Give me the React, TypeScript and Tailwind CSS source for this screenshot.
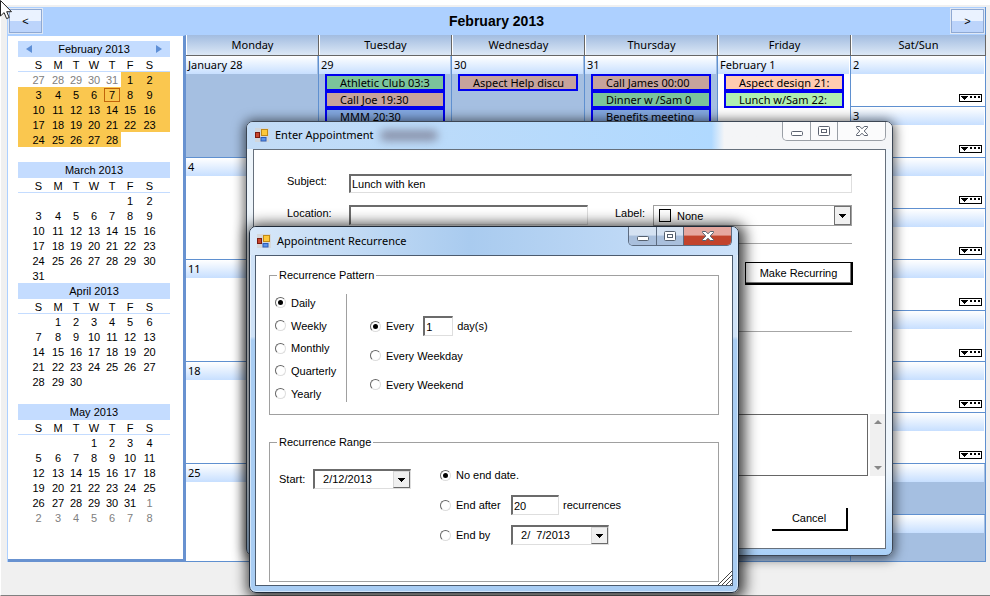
import React, { useId } from 'react';

const TAHOMA = "font-['Noto_Sans','DejaVu_Sans',sans-serif]";
const SEGOE = "font-['Noto_Sans','Open_Sans',sans-serif]";
const ARIAL = "font-['Liberation_Sans',Arial,sans-serif]";
const SUNKEN =
  'border border-t-2 border-t-[#6b6b6b] border-l-2 border-l-[#6b6b6b] border-r-[#dedede] border-b-[#dedede] bg-white';

/* ---------- month overview in the side bar ---------- */

type Month = { name: string; first: number; days: number; before?: number[]; after?: number[]; current?: boolean };

const months: Month[] = [
  { name: 'February 2013', first: 5, days: 28, before: [27, 28, 29, 30, 31], current: true },
  { name: 'March 2013', first: 5, days: 31 },
  { name: 'April 2013', first: 1, days: 30 },
  { name: 'May 2013', first: 3, days: 31, after: [1, 2, 3, 4, 5, 6, 7, 8] },
];

const weekdays = ['S', 'M', 'T', 'W', 'T', 'F', 'S'];

function cellPadding(col: number) {
  if (col === 0) return 'pl-[10px]';
  if (col === 6) return 'pr-[10px]';
  return '';
}

function MiniMonth({ month }: { month: Month }) {
  const rows = [0, 1, 2, 3, 4, 5];
  return (
    <section>
      <div className="flex h-4 items-center justify-between bg-[#c4dcff] px-2 text-xs leading-4">
        {month.current ? (
          <button aria-label="Previous month" className="h-2 w-[6px]">
            <svg viewBox="0 0 6 8" className="block h-2 w-[6px]"><path d="M6 0v8L0 4z" fill="#5e8fd6" /></svg>
          </button>
        ) : <span />}
        <h2 className="text-[11px]">{month.name}</h2>
        {month.current ? (
          <button aria-label="Next month" className="h-2 w-[6px]">
            <svg viewBox="0 0 6 8" className="block h-2 w-[6px]"><path d="M0 0v8l6-4z" fill="#5e8fd6" /></svg>
          </button>
        ) : <span />}
      </div>
      <table className="w-full table-fixed border-collapse text-center text-[11px] leading-[14px]">
        <colgroup>
          <col className="w-[31px]" />
          <col /><col /><col /><col /><col />
          <col className="w-[31px]" />
        </colgroup>
        <thead>
          <tr className="h-[15px] shadow-[inset_0_-1px_0_#c4dcff]">
            {weekdays.map((d, i) => (
              <th key={i} className={`pt-px font-normal ${cellPadding(i)}`}>{d}</th>
            ))}
          </tr>
        </thead>
        <tbody>
          {rows.map((r) => (
            <tr key={r} className="h-[15px]">
              {weekdays.map((_, c) => {
                const n = r * 7 + c - month.first + 1;
                const inside = n >= 1 && n <= month.days;
                const outside = n < 1 ? month.before?.[r * 7 + c] : month.after?.[n - month.days - 1];
                const today = month.current && n === 7;
                return (
                  <td
                    key={c}
                    className={`pt-px ${cellPadding(c)} ${inside && month.current ? 'bg-[#fac74f]' : ''} ${inside ? '' : 'text-[#808080]'}`}
                  >
                    {today ? (
                      <span className="mx-auto block h-[14px] w-4 border border-[#c0640a] leading-3">7</span>
                    ) : inside ? n : outside}
                  </td>
                );
              })}
            </tr>
          ))}
        </tbody>
      </table>
    </section>
  );
}

/* ---------- month grid ---------- */

type Item = { text: string; color: string };
const ROSE = 'bg-[#c6a39c]';
const GREEN = 'bg-[#7bc49b]';
const BLUE = 'bg-[#84a9e2]';

type Day = { label?: string; off?: boolean; items?: Item[] };

const weeks: { days: Day[]; weekend: { label?: string; off?: boolean }[] }[] = [
  {
    days: [
      { label: 'January 28', off: true },
      {
        label: '29', off: true,
        items: [
          { text: 'Athletic Club 03:3', color: GREEN },
          { text: 'Call Joe 19:30', color: ROSE },
          { text: 'MMM 20:30', color: BLUE },
        ],
      },
      { label: '30', off: true, items: [{ text: 'Aspect Help discu', color: ROSE }] },
      {
        label: '31', off: true,
        items: [
          { text: 'Call James 00:00', color: ROSE },
          { text: 'Dinner w /Sam 0', color: GREEN },
          { text: 'Benefits meeting', color: BLUE },
        ],
      },
      {
        label: 'February 1',
        items: [
          { text: 'Aspect design 21:', color: 'bg-[#ffcbb0]' },
          { text: 'Lunch w/Sam 22:', color: 'bg-[#b0f0b0]' },
        ],
      },
    ],
    weekend: [{ label: '2' }, { label: '3' }],
  },
  { days: [{ label: '4' }, {}, {}, {}, {}], weekend: [{}, {}] },
  { days: [{ label: '11' }, {}, {}, {}, {}], weekend: [{}, {}] },
  { days: [{ label: '18' }, {}, {}, {}, {}], weekend: [{}, {}] },
  { days: [{ label: '25' }, {}, {}, {}, { off: true }], weekend: [{ off: true }, { off: true }] },
];

const GRID = 'grid grid-cols-[repeat(5,minmax(0,133fr))_minmax(0,135fr)]';

function DayLabel({ text }: { text?: string }) {
  return (
    <div className="mr-[1px] h-[18px] shrink-0 bg-linear-to-b from-white to-[#c7dfff] pl-[2px] text-[11px] leading-[17px]">{text}</div>
  );
}

function MoreButton() {
  return (
    <button aria-label="More appointments" className="mt-auto mr-[3px] mb-1 self-end">
      <svg viewBox="0 0 23 8" className="block h-2 w-[23px]" shapeRendering="crispEdges">
        <rect x=".5" y=".5" width="22" height="7" fill="#fff" stroke="#000" />
        <path d="M2 2h7v1H8v1H7v1H6v1H5V5H4V4H3V3H2zM11 2h2v2h-2zM15 2h2v2h-2zM19 2h2v2h-2z" fill="#000" />
      </svg>
    </button>
  );
}

function MonthGrid() {
  return (
    <div className={`flex min-w-0 flex-1 flex-col ${TAHOMA}`}>
      <div className={`${GRID} h-[21px] border-b border-[#666]`}>
        {['Monday', 'Tuesday', 'Wednesday', 'Thursday', 'Friday', 'Sat/Sun'].map((d) => (
          <div
            key={d}
            className="border-r border-l border-r-[#666] border-l-white bg-linear-to-b from-[#a2bce0] to-[#dce8f6] text-center text-[11px] leading-5"
          >
            {d}
          </div>
        ))}
      </div>
      {weeks.map((w, i) => (
        <div key={i} className={`${GRID} border-b border-[#5f90d0] ${i === 4 ? 'h-[98px]' : 'h-[102px]'}`}>
          {w.days.map((d, j) => (
            <div key={j} className={`overflow-hidden border-r border-[#5f90d0] ${d.off ? 'bg-[#a5bfe1]' : 'bg-white'}`}>
              <DayLabel text={d.label} />
              <ul className="mx-[6px] text-[11px]">
                {d.items?.map((it) => (
                  <li key={it.text} className={`h-[17px] overflow-hidden border-2 border-[#0000f0] pl-[13px] leading-[13px] whitespace-nowrap ${it.color}`}>
                    {it.text}
                  </li>
                ))}
              </ul>
            </div>
          ))}
          <div className="flex flex-col border-r border-[#5f90d0]">
            {w.weekend.map((d, j) => (
              <div
                key={j}
                className={`flex flex-col ${j === 0 ? 'h-[51px] border-b border-[#5f90d0]' : 'flex-1'} ${d.off ? 'bg-[#a5bfe1]' : 'bg-white'}`}
              >
                <DayLabel text={d.label} />
                {!d.off && <MoreButton />}
              </div>
            ))}
          </div>
        </div>
      ))}
    </div>
  );
}

function NavButton({ label, children }: { label: string; children: React.ReactNode }) {
  return (
    <button
      aria-label={label}
      className="h-6 w-[33px] border border-[#8fa9d3] bg-linear-to-b from-[#eaf2ff] from-50% to-[#bcd4fb] to-50% text-[11px] leading-5 outline-1 outline-[#dfe8f5]"
    >
      {children}
    </button>
  );
}

/* ---------- dialog windows ---------- */

function FormIcon() {
  return (
    <svg viewBox="0 0 14 14" className="h-[14px] w-[14px] shrink-0">
      <rect width="14" height="14" fill="#d4d4d4" opacity=".8" />
      <rect x=".5" y="4.5" width="4" height="5" fill="#c8452c" stroke="#7c1c10" />
      <rect x="6.5" y="1.500" width="6" height="6" fill="#fdc83a" stroke="#c08a18" />
      <rect x="6" y="9.500" width="5" height="3.500" fill="#5b93ea" stroke="#2c5cb8" />
    </svg>
  );
}

function CaptionButtons({ active }: { active?: boolean }) {
  const glyph = active ? '#55606f' : '#5c6270';
  const plain = active
    ? 'bg-linear-to-b from-[#d5e2f2] from-45% to-[#a9bfdc] to-50%'
    : 'bg-white/60';
  const close = active
    ? 'bg-linear-to-b from-[#e6a79f] from-45% to-[#c2432c] to-50%'
    : 'bg-white/60';
  const line = active ? 'border-[#5c6b80]' : 'border-[#9a9fa6]';
  return (
    <div className={`flex h-[19px] overflow-hidden rounded-b-[5px] border border-t-0 ${line}`}>
      <button aria-label="Minimize" className={`flex w-7 items-end justify-center border-r pb-1 ${line} ${plain}`}>
        <svg viewBox="0 0 12 5" className="h-[5px] w-3"><rect x=".5" y=".5" width="11" height="4" rx="1" fill="#fff" stroke={glyph} /></svg>
      </button>
      <button aria-label="Maximize" className={`flex w-[27px] items-center justify-center border-r ${line} ${plain}`}>
        <svg viewBox="0 0 12 10" className="h-[10px] w-3">
          <rect x=".5" y=".5" width="11" height="9" rx="1" fill="#fff" stroke={glyph} />
          <rect x="3.500" y="3.500" width="5" height="3" fill="#fff" stroke={glyph} />
        </svg>
      </button>
      <button aria-label="Close" className={`flex w-[47px] items-center justify-center ${close}`}>
        <svg viewBox="0 0 12 10" className="h-[10px] w-3">
          <path d="M.5.5h3.300L6 2.800 8.200.5h3.300v1L8.200 5l3.300 3.500v1H8.200L6 7.200 3.800 9.500H.5v-1L3.800 5 .5 1.500z" fill="#fff" stroke={glyph} />
        </svg>
      </button>
    </div>
  );
}

function ArrowGlyph() {
  return (
    <svg viewBox="0 0 7 4" className="h-1 w-[7px]" shapeRendering="crispEdges">
      <path d="M0 0h7v1H6v1H5v1H4v1H3V3H2V2H1V1H0z" fill="#000" />
    </svg>
  );
}

const RAISED = 'flex items-center justify-center border border-[#d8d8d8] border-r-[#6b6b6b] border-b-[#6b6b6b] bg-[#f0f0f0]';

function Radio({ name, label, checked }: { name: string; label: string; checked?: boolean }) {
  return (
    <label className="flex items-center gap-[5px] whitespace-nowrap">
      <input
        type="radio"
        name={name}
        defaultChecked={checked}
        className="flex h-[11px] w-[11px] shrink-0 appearance-none items-center justify-center rounded-full border border-[#666] border-r-[#ddd] border-b-[#ddd] bg-white checked:before:h-[5px] checked:before:w-[5px] checked:before:rounded-full checked:before:bg-black"
      />
      <span className="pt-px">{label}</span>
    </label>
  );
}

function DateBox({ label, value }: { label: string; value: string }) {
  return (
    <div className={`flex h-5 w-[98px] ${SUNKEN}`}>
      <input aria-label={label} defaultValue={value} className="w-0 flex-1 pl-[5px] outline-none" />
      <button aria-label={`Open ${label}`} className={`w-[17px] ${RAISED}`}><ArrowGlyph /></button>
    </div>
  );
}

function AppointmentDialog() {
  const id = useId();
  return (
    <div
      role="dialog"
      aria-label="Enter Appointment"
      className="absolute top-[121px] left-[246px] flex h-[435px] w-[647px] flex-col overflow-hidden rounded-[7px] border border-[#3c4654] bg-linear-to-b from-[#eef5fb] from-80% to-[#a9d0f8] px-[6px] pb-[6px] shadow-[0_1px_12px_2px_rgba(0,0,0,0.6)]"
    >
      <div className="-mx-[6px] flex h-[27px] shrink-0 justify-between bg-linear-to-r from-[#c3dcf6] from-0% via-[#b0d9ff] via-72% to-[#f4f5f7] to-74% pr-[6px] pl-2">
        <div className="flex items-center gap-[6px] pb-px">
          <FormIcon />
          <h2 className={`text-[11px] ${SEGOE}`}>Enter Appointment</h2>
          <span className="h-[11px] w-[58px] rounded-full bg-[#8a93ab] blur-[4px]" />
        </div>
        <CaptionButtons />
      </div>
      <div className="flex flex-1 flex-col border border-[#66707c] bg-white">
        <div className="grid grid-cols-[62px_1fr] gap-y-3 pt-6 pr-[33px] pl-[33px]">
          <label htmlFor={`${id}s`} className="leading-[14px]">Subject:</label>
          <input id={`${id}s`} defaultValue="Lunch with ken" className={`h-[19px] px-px outline-none ${SUNKEN}`} />
          <label htmlFor={`${id}l`} className="leading-4">Location:</label>
          <div className="flex">
            <input id={`${id}l`} className={`h-5 w-[239px] outline-none ${SUNKEN}`} />
            <label htmlFor={`${id}c`} className="ml-[27px] leading-4">Label:</label>
            <div className="relative ml-auto h-[21px] w-[199px]">
              <select id={`${id}c`} className="h-[21px] w-full appearance-none border border-[#a0a0a0] bg-white pt-px pl-[23px] outline-none">
                <option>None</option>
              </select>
              <span className="pointer-events-none absolute top-[4px] left-[6px] h-[13px] w-[12px] border border-black" />
              <span className="pointer-events-none absolute top-[1px] right-[1px] flex h-[19px] w-[17px] items-center justify-center border border-[#707070] bg-[#f0f0f0]"><ArrowGlyph /></span>
            </div>
          </div>
        </div>
        <hr className="mt-[17px] mr-[33px] ml-[33px] border-[#a6a6a6]" />
        <button className="mt-[18px] mr-8 h-[23px] w-[108px] self-end border border-r-2 border-b-2 border-black bg-white shadow-[inset_-1px_-1px_0_#777]">Make Recurring</button>
        <hr className="mt-[46px] mr-[33px] ml-[33px] border-[#a6a6a6]" />
        <div className="mt-[82px] ml-[33px] flex h-[62px]">
          <textarea aria-label="Notes" className="mr-[2px] flex-1 resize-none border border-[#666] outline-none" />
          <div className="flex w-[15px] flex-col items-center justify-between bg-[#f0f0f0] py-[6px]">
            <svg viewBox="0 0 8 4" className="h-1 w-2"><path d="M0 4h8L4 0z" fill="#888" /></svg>
            <svg viewBox="0 0 8 4" className="h-1 w-2"><path d="M0 0h8L4 4z" fill="#888" /></svg>
          </div>
        </div>
        <button className="mt-[32px] mr-[37px] h-[23px] w-[76px] self-end border-r-2 border-b-2 border-black bg-white">Cancel</button>
      </div>
    </div>
  );
}

function RecurrenceDialog() {
  return (
    <div
      role="dialog"
      aria-label="Appointment Recurrence"
      className="absolute top-[226px] left-[249px] flex h-[367px] w-[490px] flex-col overflow-hidden rounded-[7px] border border-[#1f2a38] bg-linear-to-b from-[#cfe2f7] from-30% to-[#a9cdf3] to-31% px-[5px] pb-[6px] shadow-[inset_0_0_0_1px_rgba(255,255,255,0.5),2px_2px_14px_4px_rgba(0,0,0,0.75)]"
    >
      <div className="-mx-[5px] flex h-7 shrink-0 justify-between bg-linear-to-r from-[#d8e8f9] via-[#a9cbef] via-45% to-[#cde2fa] pr-[6px] pl-[7px]">
        <div className="flex items-center gap-[6px]">
          <FormIcon />
          <h2 className={`text-[11px] ${SEGOE}`}>Appointment Recurrence</h2>
        </div>
        <CaptionButtons active />
      </div>
      <div className="relative flex-1 border border-[#4c5b6e] bg-white px-[13px] pt-3">
        <fieldset className="flex h-[147px] border border-[#a0a0a0] pl-[5px]">
          <legend className="ml-[2px] px-[2px] leading-[14px]">Recurrence Pattern</legend>
          <div className="mt-[12px] flex h-[108px] w-[72px] flex-col justify-between border-r border-[#a0a0a0]">
            <Radio name="pattern" label="Daily" checked />
            <Radio name="pattern" label="Weekly" />
            <Radio name="pattern" label="Monthly" />
            <Radio name="pattern" label="Quarterly" />
            <Radio name="pattern" label="Yearly" />
          </div>
          <div className="ml-[23px] flex flex-col items-start pt-[34px]">
            <div className="flex h-5 items-center gap-1">
              <Radio name="every" label="Every" checked />
              <input aria-label="Number of days" defaultValue="1" className={`ml-[5px] h-5 w-[30px] px-px outline-none ${SUNKEN}`} />
              <span>day(s)</span>
            </div>
            <div className="mt-[11px]"><Radio name="every" label="Every Weekday" /></div>
            <div className="mt-[11px]"><Radio name="every" label="Every Weekend" /></div>
          </div>
        </fieldset>
        <fieldset className="mt-5 flex h-[147px] border border-[#a0a0a0] pl-[9px]">
          <legend className="-ml-[2px] px-[2px] leading-[14px]">Recurrence Range</legend>
          <div className="flex items-start pt-[20px]">
            <span className="w-[34px] leading-5">Start:</span>
            <DateBox label="start date" value=" 2/12/2013" />
          </div>
          <div className="ml-[29px] flex flex-col items-start gap-[10px] pt-4">
            <div className="flex h-5 items-center"><Radio name="range" label="No end date." checked /></div>
            <div className="flex h-5 items-center gap-1">
              <span className="w-[67px]"><Radio name="range" label="End after" /></span>
              <input aria-label="Number of recurrences" defaultValue="20" className={`h-5 w-12 px-px outline-none ${SUNKEN}`} />
              <span>recurrences</span>
            </div>
            <div className="flex h-5 items-center gap-1">
              <span className="w-[67px]"><Radio name="range" label="End by" /></span>
              <DateBox label="end date" value=" 2/  7/2013" />
            </div>
          </div>
        </fieldset>
        <svg viewBox="0 0 14 14" className="absolute right-0 bottom-0 h-[14px] w-[14px]">
          <path d="M0 14L14 0M4 14L14 4M8 14L14 8M12 14l2-2" stroke="#444" />
        </svg>
      </div>
    </div>
  );
}

export default function App() {
  return (
    <main className={`relative min-h-screen border-t-[5px] border-b border-l-[1px] border-t-white border-l-white border-b-[#808080] bg-[#f0f0f0] pt-[2px] pr-1 pl-[6px] text-[11px] text-black ${ARIAL}`}>
      <div className="border-l border-[#add0ff]">
        <header className="flex h-7 items-center justify-between border-r border-[#5f90d0] bg-[#add0ff] px-px">
          <NavButton label="Previous">&lt;</NavButton>
          <h1 className={`text-sm font-bold ${ARIAL}`}>February 2013</h1>
          <NavButton label="Next">&gt;</NavButton>
        </header>
        <div className="flex">
          <aside className="w-[178px] shrink-0 border-t border-r-[3px] border-b-[3px] border-t-[#add0ff] border-r-[#6892d0] border-b-[#6892d0] bg-white pt-[5px] pr-[13px] pl-[10px]">
            {months.map((m) => <MiniMonth key={m.name} month={m} />)}
          </aside>
          <MonthGrid />
        </div>
      </div>
      <svg viewBox="0 0 12 20" className="absolute -top-[5px] -left-px h-5 w-3">
        <path d="M.5.500v15.500l3.600-3.400 2.500 6 2.600-1.100-2.500-5.800h4.800z" fill="#fff" stroke="#222" />
      </svg>
      <div className="absolute -top-[5px] -left-px">
        <AppointmentDialog />
        <RecurrenceDialog />
      </div>
    </main>
  );
}
